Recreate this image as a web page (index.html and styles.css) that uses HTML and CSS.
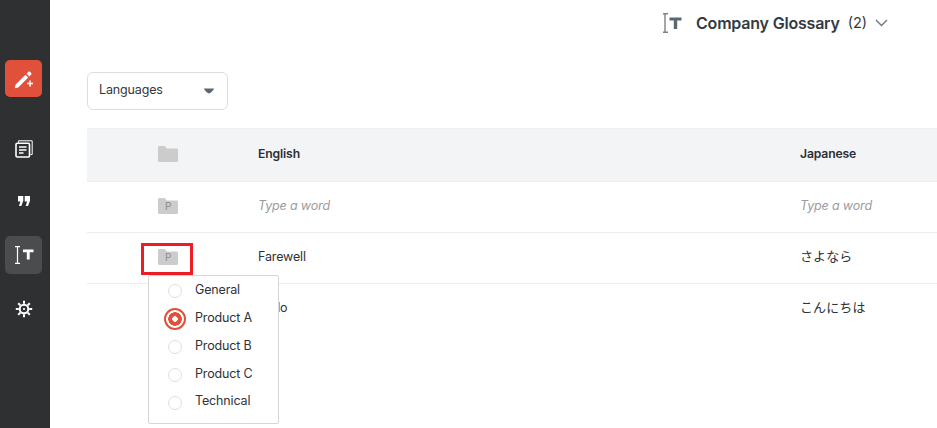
FILE: index.html
```html
<!DOCTYPE html>
<html lang="en">
<head>
<meta charset="utf-8">
<title>Company Glossary</title>
<link rel="stylesheet" href="styles.css">
</head>
<body>
<div class="app">
  <nav class="sidebar">
    <div class="nav-btn nav-edit">
      <svg width="20" height="20" viewBox="0 0 20 20"><path d="M1.500 15.800 11.500 5.800l2.700 2.700-10 10-3.400.7z M12.600 4.700l1.900-1.900c.4-.4 1-.4 1.400 0l1.300 1.300c.4.4.4 1 0 1.400l-1.900 1.900z" fill="#fff"/><path d="M15.300 11.500h1.500v2.200H19v1.500h-2.200v2.200h-1.500v-2.200h-2.200v-1.500h2.200z" fill="#fff"/></svg>
    </div>
    <div class="nav-btn nav-docs">
      <svg width="18" height="18" viewBox="0 0 18 18" fill="none" stroke="#fff"><path d="M3.500 .8h13.700v13.700h-1.800" stroke-width="1"/><path d="M3.500 .8v1.800" stroke-width="1"/><rect x="1" y="3.300" width="13.500" height="13.700" rx="1.200" stroke-width="1.600"/><path d="M4 7h7.500M4 10h7.500M4 13h4.500" stroke-width="1.500"/></svg>
    </div>
    <div class="nav-btn nav-quote">
      <svg width="12" height="10" viewBox="0 0 12 10" fill="#fff"><path d="M0 0h5.300v4.700L3.300 10H1l1.400-4.500H0zM6.700 0H12v4.700L10 10H7.700l1.400-4.500H6.700z"/></svg>
    </div>
    <div class="nav-btn nav-active">
      <svg width="20" height="18" viewBox="0 0 20 18" fill="none"><path d="M1 .6h5M1 17.400h5M3.500 .6v16.800" stroke="#fff" stroke-width="1.200"/><path d="M9 3.500h10.500v2.700h-3.800v7.300h-2.900V6.200H9z" fill="#fff"/></svg>
    </div>
    <div class="nav-btn nav-gear">
      <svg width="18" height="18" viewBox="0 0 18 18" fill="none" stroke="#fff"><circle cx="9" cy="9" r="4.300" stroke-width="2"/><circle cx="9" cy="9" r="1.100" fill="#fff" stroke="none"/><path d="M9 .8v3M9 14.200v3M.8 9h3M14.200 9h3M3.200 3.200l2.100 2.100M12.700 12.700l2.100 2.100M3.200 14.800l2.100-2.100M12.700 5.300l2.100-2.100" stroke-width="2"/></svg>
    </div>
  </nav>
  <main class="main">
    <header class="topbar">
      <svg class="top-icon" width="20" height="20" viewBox="0 0 20 20" fill="none"><path d="M1 .7h5M1 19.300h5M3 .7v18.600" stroke="#7d8288" stroke-width="1.400"/><path d="M7.500 4.500h12v3h-4.300v8.500h-3.400V7.500H7.500z" fill="#5b6771"/></svg>
      <span class="top-title">Company Glossary</span>
      <span class="top-count">(2)</span>
      <svg class="top-chev" width="13" height="8" viewBox="0 0 13 8" fill="none"><path d="M1 1l5.500 5.500L12 1" stroke="#6b7680" stroke-width="1.400"/></svg>
    </header>
    <div class="filter-row">
      <div class="select">
        <span>Languages</span>
        <svg width="10" height="6" viewBox="0 0 10 6"><path d="M0 .5h10c0 1-3.500 5-5 5S0 1.500 0 .5z" fill="#5b6771"/></svg>
      </div>
    </div>
    <section class="table">
      <div class="row row-head">
        <div class="cell-icon">
          <svg width="20" height="16" viewBox="0 0 20 16"><path class="folder" d="M0 1.500C0 .700.600 0 1.300 0h5.500l2 2.500h10c.700 0 1.200.500 1.200 1.200v10.800c0 .800-.500 1.500-1.200 1.500H1.300C.600 16 0 15.300 0 14.500z"/></svg>
        </div>
        <div class="cell">English</div>
        <div class="cell">Japanese</div>
      </div>
      <div class="row">
        <div class="cell-icon">
          <div class="pfolder">
            <svg width="20" height="16" viewBox="0 0 20 16"><path class="folder" d="M0 1.500C0 .700.600 0 1.300 0h5.500l2 2.500h10c.700 0 1.200.500 1.200 1.200v10.800c0 .800-.500 1.500-1.200 1.500H1.300C.600 16 0 15.300 0 14.500z"/></svg>
            <span class="pfolder-label">P</span>
          </div>
        </div>
        <div class="cell placeholder">Type a word</div>
        <div class="cell placeholder">Type a word</div>
      </div>
      <div class="row">
        <div class="cell-icon">
          <div class="pfolder">
            <svg width="20" height="16" viewBox="0 0 20 16"><path class="folder" d="M0 1.500C0 .700.600 0 1.300 0h5.500l2 2.500h10c.700 0 1.200.500 1.200 1.200v10.800c0 .800-.500 1.500-1.200 1.500H1.300C.600 16 0 15.300 0 14.500z"/></svg>
            <span class="pfolder-label">P</span>
          </div>
          <div class="highlight"></div>
          <ul class="menu">
            <li class="menu-item"><span class="radio"></span>General</li>
            <li class="menu-item"><span class="radio radio-on"></span>Product A</li>
            <li class="menu-item"><span class="radio"></span>Product B</li>
            <li class="menu-item"><span class="radio"></span>Product C</li>
            <li class="menu-item"><span class="radio"></span>Technical</li>
          </ul>
        </div>
        <div class="cell">Farewell</div>
        <div class="cell jp">さよなら</div>
      </div>
      <div class="row row-last">
        <div class="cell-icon"></div>
        <div class="cell">Hello</div>
        <div class="cell jp">こんにちは</div>
      </div>
    </section>
  </main>
</div>
</body>
</html>
```
FILE: styles.css
```css
* { box-sizing: border-box; }
html, body { margin: 0; height: 100%; overflow: hidden; background: #fff; }
body { font-family: Inter, "Noto Sans CJK JP", sans-serif; font-size: 12.500px; letter-spacing: -.15px; color: #2f3338; }
.app { display: flex; height: 428px; }

.sidebar { width: 50px; flex: none; background: #2f3032; display: flex; flex-direction: column; align-items: center; padding: 60px 8px 0 5px; }
.nav-btn { width: 37px; height: 37px; border-radius: 5px; display: flex; align-items: center; justify-content: center; flex: none; }
.nav-edit { background: #e1503b; }
.nav-docs { margin-top: 33px; }
.nav-quote { margin-top: 15px; }
.nav-active { background: #4b4c4e; margin-top: 17px; height: 38px; }
.nav-gear { margin-top: 16px; }

.main { flex: 1; min-width: 0; padding-left: 37px; display: flex; flex-direction: column; }
.topbar { height: 46px; padding-bottom: 1px; display: flex; align-items: center; padding-left: 575px; }
.top-icon { margin-right: 14px; }
.top-title { font-size: 16px; font-weight: 600; color: #343a42; letter-spacing: -.2px; }
.top-count { font-size: 14.500px; margin-left: 8px; color: #343a42; letter-spacing: 0; }
.top-chev { margin-left: 8px; }

.filter-row { padding-top: 26px; }
.select { width: 141px; height: 38px; border: 1px solid #dcdee0; border-radius: 6px; display: flex; align-items: center; justify-content: space-between; padding: 0 13px 0 11px; color: #33383d; }
.select span { position: relative; top: -2px; }

.table { margin-top: 18px; }
.row { display: grid; grid-template-columns: 171px 542px 1fr; height: 51px; align-items: center; border-bottom: 1px solid #ebeced; }
.row-head { height: 54px; background: #f3f4f6; border-top: 1px solid #eeeff0; font-weight: 600; font-size: 12.200px; color: #2c3036; }
.row-last { border-bottom: none; }
.cell-icon { position: relative; height: 100%; display: flex; align-items: center; justify-content: flex-start; padding-left: 71px; padding-bottom: 2px; }
.cell { white-space: nowrap; position: relative; top: -2px; }
.jp { top: -3px; letter-spacing: .1px; font-size: 13px; }
.placeholder { font-style: italic; color: #9a9ca0; }
.folder { fill: #cccccc; }
.pfolder { position: relative; width: 20px; height: 16px; }
.pfolder svg { display: block; }
.pfolder-label { position: absolute; left: 7px; top: 1px; font-size: 10px; line-height: 14px; font-weight: 400; color: #8b8b8b; letter-spacing: 0; }

.highlight { position: absolute; left: 54px; top: 10px; width: 52px; height: 32px; border: 3px solid #ee1c25; }
.menu { position: absolute; left: 61px; top: 42px; width: 131px; height: 149px; margin: 0; padding: 0 0 8px; list-style: none; background: #fff; border: 1px solid #d5d6d8; border-radius: 2px; z-index: 2; }
.menu-item { height: 28px; display: flex; align-items: center; padding-left: 19px; color: #2f3338; white-space: nowrap; line-height: 26px; padding-bottom: 1px; }
.menu-item:last-child { padding-bottom: 3px; }
.menu-item:last-child .radio { top: 2px; }
.radio { width: 14px; height: 14px; border: 1px solid #dddfe1; border-radius: 50%; margin-right: 13px; flex: none; position: relative; top: 1px; }
.radio-on { width: 22px; height: 22px; margin: 0 9px 0 -4px; border: 2px solid #e1503b; background: radial-gradient(circle, #fff 0 2.500px, #e1503b 3px 6.500px, #fff 7px); }
```
